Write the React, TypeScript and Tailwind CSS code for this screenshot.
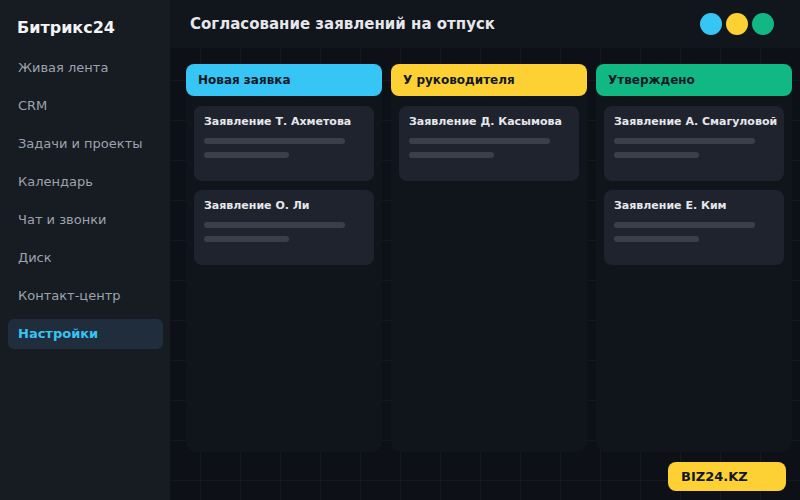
import React from "react"

const nav = [
  "Живая лента",
  "CRM",
  "Задачи и проекты",
  "Календарь",
  "Чат и звонки",
  "Диск",
  "Контакт-центр",
  "Настройки",
]

type Column = {
  title: string
  headerClass: string
  cards: string[]
}

const columns: Column[] = [
  {
    title: "Новая заявка",
    headerClass: "bg-[#36c5f4]",
    cards: ["Заявление Т. Ахметова", "Заявление О. Ли"],
  },
  {
    title: "У руководителя",
    headerClass: "bg-[#fdd034]",
    cards: ["Заявление Д. Касымова"],
  },
  {
    title: "Утверждено",
    headerClass: "bg-[#12b883]",
    cards: ["Заявление А. Смагуловой", "Заявление Е. Ким"],
  },
]

export default function App() {
  return (
    <div
      className="relative flex h-[500px] w-[800px] overflow-hidden bg-[#0d1117] bg-[linear-gradient(to_right,#ffffff08_1px,transparent_1px),linear-gradient(to_bottom,#ffffff08_1px,transparent_1px)] bg-[size:40px_40px] font-['DejaVu_Sans',sans-serif]"
    >
      {/* Sidebar */}
      <aside className="flex w-[170px] shrink-0 flex-col bg-[#171b22] px-2 pt-[18px]">
        <div className="px-[9px] text-[16px] font-bold leading-5 text-[#f3f4f6]">
          Битрикс24
        </div>
        <nav className="mt-[15px] flex w-[155px] flex-col gap-2">
          {nav.map((item) => {
            const active = item === "Настройки"
            return (
              <div
                key={item}
                className={
                  active
                    ? "flex h-[30px] items-center rounded-md bg-[#1f2d3d] px-[10px] text-[13px] font-bold text-[#38c3f2]"
                    : "flex h-[30px] items-center px-[10px] text-[13px] text-[#9ca3af]"
                }
              >
                {item}
              </div>
            )
          })}
        </nav>
      </aside>

      {/* Main */}
      <main className="flex flex-1 flex-col">
        <header className="flex h-12 shrink-0 items-center justify-between bg-[#11151c] pl-5 pr-[26px]">
          <h1 className="text-[15px] font-bold text-[#e5e7eb]">
            Согласование заявлений на отпуск
          </h1>
          <div className="flex gap-1">
            <span className="h-[22px] w-[22px] rounded-full bg-[#36c5f4]" />
            <span className="h-[22px] w-[22px] rounded-full bg-[#fdd034]" />
            <span className="h-[22px] w-[22px] rounded-full bg-[#12b883]" />
          </div>
        </header>

        <div className="flex gap-[9px] pl-4 pt-4">
          {columns.map((col) => (
            <section
              key={col.title}
              className="flex h-[388px] w-[196px] flex-col rounded-[10px] bg-[#10151c]"
            >
              <div
                className={`flex h-8 items-center rounded-lg px-3 text-[12px] font-bold text-[#111827] ${col.headerClass}`}
              >
                {col.title}
              </div>
              <div className="mt-[10px] flex flex-col gap-[9px] px-2">
                {col.cards.map((card) => (
                  <div
                    key={card}
                    className="h-[75px] rounded-lg bg-[#1e232d] px-[10px] pt-[9px]"
                  >
                    <div className="text-[11px] font-bold leading-[14px] whitespace-nowrap text-[#e5e7eb]">
                      {card}
                    </div>
                    <div className="mt-[9px] h-[6px] w-[141px] rounded-full bg-[#3a404b]" />
                    <div className="mt-2 h-[6px] w-[85px] rounded-full bg-[#3a404b]" />
                  </div>
                ))}
              </div>
            </section>
          ))}
        </div>
      </main>

      {/* Watermark badge */}
      <div className="absolute bottom-[9px] right-[14px] flex h-[29px] w-[118px] items-center rounded-lg bg-[#fdd034] px-[13px] text-[13px] font-bold text-[#111827]">
        BIZ24.KZ
      </div>
    </div>
  )
}
